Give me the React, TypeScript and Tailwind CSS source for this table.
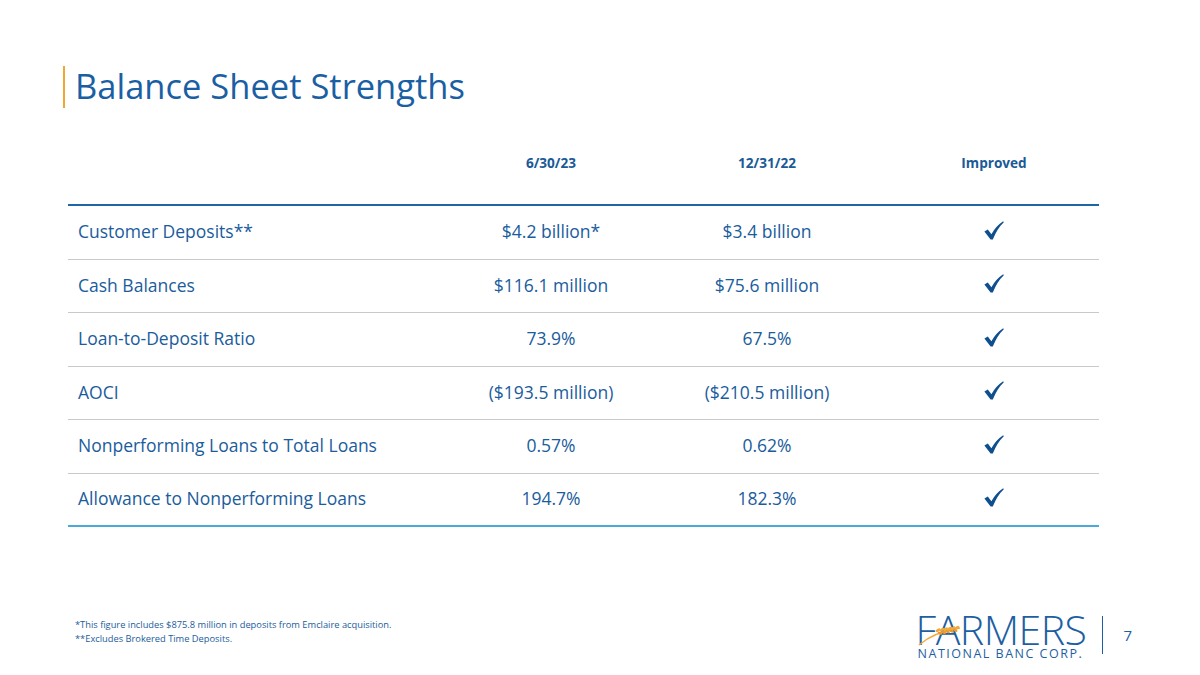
import React from "react"

const rows = [
  { label: "Customer Deposits**", a: "$4.2 billion*", b: "$3.4 billion" },
  { label: "Cash Balances", a: "$116.1 million", b: "$75.6 million" },
  { label: "Loan-to-Deposit Ratio", a: "73.9%", b: "67.5%" },
  { label: "AOCI", a: "($193.5 million)", b: "($210.5 million)" },
  { label: "Nonperforming Loans to Total Loans", a: "0.57%", b: "0.62%" },
  { label: "Allowance to Nonperforming Loans", a: "194.7%", b: "182.3%" },
]

function Check() {
  return (
    <svg width="20" height="19" viewBox="0 0 20 19" className="text-[#0f4f8e]">
      <path
        d="M0.4 10.6 L3.8 8.6 L7.4 13.2 Q12 5 19.2 0.3 L19.8 1.2 Q13.4 7.2 8.8 18.4 L6.6 18.6 Z"
        fill="currentColor"
      />
    </svg>
  )
}

function Wheat() {
  return (
    <svg width="44" height="26" viewBox="0 0 44 26" className="absolute left-[2px] top-[8px]">
      <path d="M1 25 Q16 12 42 8" stroke="#f2a93b" strokeWidth="1.4" fill="none" />
      {[0, 1, 2, 3, 4, 5].map((i) => (
        <ellipse
          key={i}
          cx={20 + i * 3.8}
          cy={10.2 - i * 0.5}
          rx="2.6"
          ry="1.4"
          fill="#f2a93b"
          transform={`rotate(-30 ${20 + i * 3.8} ${10.2 - i * 0.5})`}
        />
      ))}
      {[0, 1, 2, 3, 4].map((i) => (
        <ellipse
          key={"b" + i}
          cx={22 + i * 3.8}
          cy={13.2 - i * 0.7}
          rx="2.4"
          ry="1.3"
          fill="#e89a2a"
          transform={`rotate(20 ${22 + i * 3.8} ${13.2 - i * 0.7})`}
        />
      ))}
    </svg>
  )
}

export default function App() {
  return (
    <div className="w-[1200px] h-[675px] bg-white flex flex-col font-['Open_Sans',sans-serif] text-[#1a5c9c]">
      <div className="pt-[66px] pl-[63px]">
        <div className="border-l-2 border-[#f0a830] pl-[10px] h-[42px] flex items-center">
          <h1 className="text-[34.5px] leading-[42px] text-[#1a5fa3] -mt-[2px]">
            Balance Sheet Strengths
          </h1>
        </div>
      </div>

      <div className="ml-[68px] w-[1031px]">
        <div className="flex pt-[46px] pb-[32px] border-b-2 border-[#1e67a6] text-[13.6px] leading-[18px] font-bold text-[#1a5a96]">
          <div className="w-[375px]" />
          <div className="w-[216px] text-center">6/30/23</div>
          <div className="w-[216px] text-center">12/31/22</div>
          <div className="w-[224px] text-center pl-[14px]">Improved</div>
        </div>
        {rows.map((r, i) => (
          <div
            key={r.label}
            className={`flex items-center h-[53.5px] text-[17.5px] ${
              i === rows.length - 1 ? "border-b-2 border-[#4aa9d9]" : "border-b border-[#c9c9c9]"
            }`}
          >
            <div className="w-[375px] pl-[10px] -mt-[2px]">{r.label}</div>
            <div className="w-[216px] text-center -mt-[2px]">{r.a}</div>
            <div className="w-[216px] text-center -mt-[2px]">{r.b}</div>
            <div className="w-[224px] flex justify-center pl-[14px] -mt-[4px]">
              <Check />
            </div>
          </div>
        ))}
      </div>

      <div className="mt-auto mb-[13px] flex items-end justify-between pl-[75px] pr-[68px]">
        <div className="text-[9.3px] leading-[14px] text-[#1a5c9c] pb-[16px]">
          <p>*This figure includes $875.8 million in deposits from Emclaire acquisition.</p>
          <p>**Excludes Brokered Time Deposits.</p>
        </div>
        <div className="flex items-center">
          <div className="relative flex flex-col items-start">
            <div className="text-[41px] leading-[34px] font-light text-[#1d5fa2] tracking-[-0.5px]">FARMERS</div>
            <Wheat />
            <div className="text-[12.5px] leading-[16px] text-[#1d5fa2] tracking-[1.5px] ml-[2px]">
              NATIONAL BANC CORP.
            </div>
          </div>
          <div className="ml-[16px] w-px h-[38px] bg-[#1d5fa2] -mt-[4px]" />
          <div className="ml-[20px] text-[15px] text-[#1d5fa2] -mt-[4px]">7</div>
        </div>
      </div>
    </div>
  )
}
